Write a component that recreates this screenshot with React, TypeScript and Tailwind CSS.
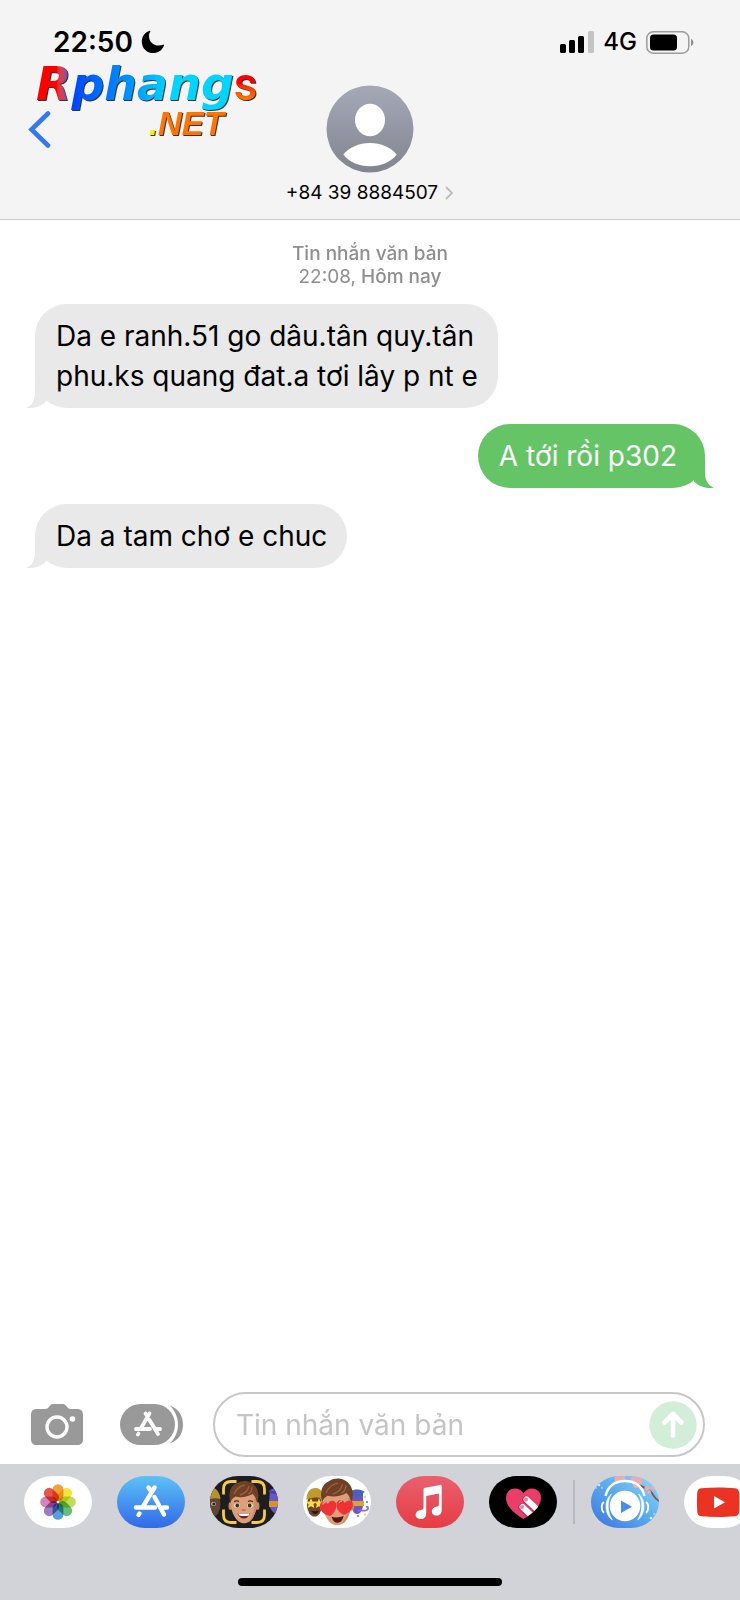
import type { ReactNode } from 'react';

type Message = {
  id: number;
  from: 'them' | 'me';
  lines: string[];
};

const messages: Message[] = [
  {
    id: 1,
    from: 'them',
    lines: ['Da e ranh.51 go dâu.tân quy.tân', 'phu.ks quang đat.a tơi lây p nt e'],
  },
  { id: 2, from: 'me', lines: ['A tới rồi p302'] },
  { id: 3, from: 'them', lines: ['Da a tam chơ e chuc'] },
];

function MoonIcon() {
  return (
    <svg width="24" height="24" viewBox="0 0 24 24" aria-hidden="true">
      <path
        d="M8.6.8C4 2.3.8 6.6.8 11.7c0 6.3 5 11.4 11.3 11.4 5 0 9.300-3.100 10.900-7.600.2-.6-.3-1.100-.9-.8-1.300.5-2.700.8-4.200.8C11.900 15.500 8 11.400 8 5.900c0-1.500.6-3.100 1.300-4.300.3-.6 0-1-.7-.8Z"
        fill="#000"
      />
    </svg>
  );
}

function SignalIcon() {
  return (
    <svg width="34" height="22" viewBox="0 0 34 22" aria-hidden="true">
      <rect x="0" y="13" width="6" height="9" rx="1.500" />
      <rect x="9" y="9" width="6" height="13" rx="1.500" />
      <rect x="18" y="5" width="6" height="17" rx="1.500" />
      <rect x="28" y="0" width="6" height="22" rx="1.500" fill="#c4c4c4" />
    </svg>
  );
}

function BatteryIcon() {
  return (
    <svg width="48" height="23" viewBox="0 0 48 23" aria-hidden="true">
      <rect x=".8" y=".8" width="42" height="21.400" rx="6.500" fill="none" stroke="#9b9b9b" strokeWidth="1.500" />
      <rect x="4" y="3.500" width="27" height="16" rx="3.500" />
      <path d="M45 8c3.200 1.200 3.200 5.800 0 7Z" fill="#8f8f8f" />
    </svg>
  );
}

function StatusBar() {
  return (
    <div className="flex h-[84px] items-start justify-between pt-[24px] pr-[46px] pl-[53px]">
      <div className="flex h-9 items-center gap-2">
        <time className="text-[28px] leading-9 font-semibold">22:50</time>
        <MoonIcon />
      </div>
      <div className="flex h-9 items-center gap-[9px]">
        <SignalIcon />
        <span className="text-[24px] leading-9 font-medium">4G</span>
        <BatteryIcon />
      </div>
    </div>
  );
}

function Watermark() {
  return (
    <div className="pointer-events-none absolute top-[56px] left-[36px] w-[222px] font-['DejaVu_Sans'] font-bold italic">
      <div className="flex items-baseline text-[46px] leading-[56px] drop-shadow-[1px_1px_0_#333333]">
        <span className="bg-linear-to-r from-[#ff0000] from-60% to-[#5a45b0] bg-clip-text text-transparent">R</span>
        <span className="bg-linear-to-r from-[#0040ff] via-[#0090ff] via-35% to-[#00d4ff] to-60% bg-clip-text text-transparent">
          phang
        </span>
        <span className="bg-linear-to-b from-[#ff0000] from-50% to-[#ff7a00] to-80% bg-clip-text font-['Roboto'] font-medium text-transparent not-italic">
          s
        </span>
      </div>
      <div className="-mt-2 pr-[34px] text-right font-['Liberation_Sans'] text-[33px] leading-[40px] text-[#ff7300] drop-shadow-[1px_1px_0_#333333]">
        <span className="text-[#ffee00]">.</span>NET
      </div>
    </div>
  );
}

function Avatar() {
  return (
    <svg width="88" height="88" viewBox="0 0 88 88" aria-hidden="true">
      <defs>
        <linearGradient id="avatar" x1="0" y1="0" x2="0" y2="1">
          <stop offset="0" stopColor="#a5a9b7" />
          <stop offset="1" stopColor="#82858f" />
        </linearGradient>
      </defs>
      <circle cx="44" cy="44" r="43.500" fill="url(#avatar)" />
      <ellipse cx="44" cy="35" rx="15" ry="16.300" fill="#fff" />
      <path d="M17.300 69.500C23 62.500 33 58 44 58s21 4.500 26.700 11.500C65 77 55 81.300 44 81.300S23 77 17.300 69.500Z" fill="#fff" />
    </svg>
  );
}

function ConversationHeader() {
  return (
    <header className="relative border-b border-[#cfcfcf] bg-[#f4f4f4]">
      <StatusBar />
      <div className="grid grid-cols-[1fr_auto_1fr] items-start pb-[14px]">
        <button type="button" aria-label="Quay lại" className="mt-[26px] ml-[28px] w-6">
          <svg width="24" height="38" viewBox="0 0 24 38" fill="none" aria-hidden="true">
            <path d="M20 3.500 3.500 19.500 20 35.500" stroke="#3478f6" strokeWidth="4.600" strokeLinecap="round" />
          </svg>
        </button>
        <button type="button" className="flex flex-col items-center gap-2 pt-[1px]">
          <Avatar />
          <span className="flex items-center gap-[6px] text-[19px] leading-6">
            +84 39 8884507
            <svg width="10" height="14" viewBox="0 0 10 14" fill="none" aria-hidden="true">
              <path d="m2 1 6 6-6 6" stroke="#bdbdbf" strokeWidth="1.800" />
            </svg>
          </span>
        </button>
      </div>
      <Watermark />
    </header>
  );
}

function Bubble({ message }: { message: Message }) {
  const mine = message.from === 'me';

  return (
    <li
      className={[
        'relative rounded-[32px] py-3 pl-[21px] text-[28px] leading-10',
        mine ? 'self-end bg-[#65c466] pr-7 text-white' : 'self-start bg-[#e9e9e9] pr-5 text-black',
      ].join(' ')}
    >
      {message.lines.map((line) => (
        <p key={line}>{line}</p>
      ))}
      <svg
        width="30"
        height="30"
        viewBox="0 0 30 30"
        aria-hidden="true"
        className={['absolute bottom-0', mine ? '-right-[9px] -scale-x-100 text-[#65c466]' : '-left-[9px] text-[#e9e9e9]'].join(' ')}
      >
        <path d="M9 0v15C9 22 6 27.500 0 29.800 8 31 15 28.500 20 23.500L22 0Z" fill="currentColor" />
      </svg>
    </li>
  );
}

function Composer() {
  return (
    <form className="flex items-center pr-[35px] pb-[7px] pl-[31px]" onSubmit={(event) => event.preventDefault()}>
      <button type="button" aria-label="Máy ảnh">
        <svg width="52" height="42" viewBox="0 0 52 42" aria-hidden="true">
          <path
            d="M6 5h8c2 0 3-.8 4-2.200C19.500.5 21 0 23 0h8c2 0 3.500.5 5 2.800C37 4.200 38 5 40 5h6c4 0 6 2 6 6v24c0 4-2 6-6 6H6c-4 0-6-2-6-6V11c0-4 2-6 6-6Z"
            fill="#999"
          />
          <circle cx="26" cy="23" r="10" fill="none" stroke="#fff" strokeWidth="3.400" />
          <circle cx="41.500" cy="15" r="2.800" fill="#fff" />
        </svg>
      </button>
      <button type="button" aria-label="Ứng dụng" className="ml-[37px]">
        <svg width="64" height="42" viewBox="0 0 64 42" aria-hidden="true">
          <rect x="0" y="0" width="55" height="41" rx="20.500" fill="#999" />
          <path d="M50 1.500C59 5 63 12 63 20.500S59 36 50 39.500C55 34 58 28 58 20.500S55 7 50 1.500Z" fill="#999" />
          <g fill="none" stroke="#fff" strokeWidth="3.800" strokeLinecap="round">
            <path d="M29.500 9.500 20.500 25M25.500 9.500l2 3M29.500 16 38 30M16 25h14M37 25h3M18.500 29.500l-.7 1" />
          </g>
        </svg>
      </button>
      <div className="ml-[29px] flex h-[65px] min-w-0 flex-1 items-center rounded-full border-2 border-[#c7c7c7] pr-[6px] pl-[21px]">
        <input
          type="text"
          aria-label="Tin nhắn văn bản"
          placeholder="Tin nhắn văn bản"
          className="min-w-0 flex-1 bg-transparent text-[28px] leading-10 outline-none placeholder:text-[#c5c5c7]"
        />
        <button type="submit" aria-label="Gửi">
          <svg width="48" height="48" viewBox="0 0 48 48" aria-hidden="true">
            <circle cx="24" cy="24" r="23.700" fill="#d3eed8" />
            <path d="M24 34.500V14M15.500 21.500 24 13l8.500 8.500" fill="none" stroke="#fff" strokeWidth="4.600" strokeLinecap="round" strokeLinejoin="round" />
          </svg>
        </button>
      </div>
    </form>
  );
}

const petals = ['#f3a13b', '#f2e33f', '#bfdc5c', '#65bd80', '#5b9fdc', '#9d7cc0', '#d386b8', '#e5574a'];

function PhotosIcon() {
  return (
    <svg width="68" height="52" viewBox="0 0 68 52" aria-hidden="true">
      <rect width="68" height="52" fill="#fff" />
      <g transform="translate(34 26)">
        {petals.map((color, index) => (
          <rect
            key={color}
            x="-5.400"
            y="-17.800"
            width="10.800"
            height="17"
            rx="5.400"
            fill={color}
            transform={`rotate(${index * 45})`}
            className="mix-blend-multiply"
          />
        ))}
        <circle r="1.300" fill="#fff" />
      </g>
    </svg>
  );
}

function AppStoreIcon() {
  return (
    <svg width="68" height="52" viewBox="0 0 68 52" aria-hidden="true">
      <defs>
        <linearGradient id="store" x1="0" y1="0" x2="0" y2="1">
          <stop offset="0" stopColor="#5cc2f6" />
          <stop offset="1" stopColor="#3269e8" />
        </linearGradient>
      </defs>
      <rect width="68" height="52" fill="url(#store)" />
      <path
        d="M37.500 11.500 26 30.500M31.500 11.500l3 4.500M37.500 21 47 38.500M19 31.500h19M46.500 31.500H50M22.500 37.500l-1 1.500"
        fill="none"
        stroke="#fff"
        strokeWidth="4.400"
        strokeLinecap="round"
      />
    </svg>
  );
}

function BoyFace({ hearts = false }: { hearts?: boolean }) {
  return (
    <g>
      <ellipse cx="20.500" cy="30" rx="2" ry="4" fill="#c98764" />
      <ellipse cx="47.500" cy="30" rx="2" ry="4" fill="#c98764" />
      <path d="M21 22c0-6 5-10 13-10s13 4 13 10c0 8 0 12-3 17.500-2.500 5-6 7.800-10 7.800s-7.500-2.800-10-7.800c-3-5.500-3-9.500-3-17.500Z" fill="#dc9f7a" />
      <path d="M44 22c1 8 0 17-6 24.500 3-1.500 5-4 6-7 2.500-6 3-10 3-17Z" fill="#cb8a66" />
      <path d="M20.500 27C18 17 20 10 27 7c7-4 15-2 19 4 3 5 3 10 1 16-.8-4-2-7-4.500-9-4.500 3-12 4-17 2.500-2.500 1.500-4.500 3-5 6.500Z" fill="#6f4026" />
      <path d="M24 18c2-5 6-8 11-9M30 19c4-1 8-4 9-9M38 18c3-1 4-4 4-7" stroke="#99603c" strokeWidth="1.300" fill="none" />
      {hearts ? (
        <>
          <path d="M28 39c-5-1.500-9.500-4-9.500-8.500 0-5 5-6 7.200-2.500 2-4.500 8-3.500 7.800 1.500-.3 4-2.500 7-5.500 9.500Z" fill="#f03236" />
          <path d="M40 38c-4-2.500-6.500-5-6.500-9.500 0-5 6-5.500 7.500-1.500 2.500-3.500 8-2 7.500 2.500-.5 4-4.500 7-8.500 8.500Z" fill="#f03236" />
          <path d="M21 28.500c.5-1.500 1.500-2 2.500-1.500M36 27c.5-1.500 1.500-2 2.500-1.500" stroke="#ff9a94" strokeWidth="1.300" fill="none" />
          <path d="M29 39.500c3 1 7 1 11-.5-.7 4-3 6-5.500 6s-4.500-2-5.500-5.500Z" fill="#571816" />
        </>
      ) : (
        <>
          <path d="M24 25.800c1.500-1.200 3.500-1.200 5-.4M38 25.400c1.500-.8 3.500-.8 5 .4" stroke="#593017" strokeWidth="1.200" fill="none" />
          <ellipse cx="27" cy="29.500" rx="2.800" ry="2" fill="#f4eee8" />
          <ellipse cx="40" cy="29.500" rx="2.800" ry="2" fill="#f4eee8" />
          <circle cx="27.300" cy="29.500" r="1.900" fill="#2c3a1f" />
          <circle cx="39.700" cy="29.500" r="1.900" fill="#2c3a1f" />
          <path d="M32 33.500c1 .8 2.500.8 3.500 0" stroke="#b36a4c" strokeWidth="1.200" fill="none" />
          <path d="M27.500 37c4 1.300 8.500 1.300 12.500 0-.8 3.500-3.300 5.500-6.200 5.500S28.300 40.500 27.500 37Z" fill="#74251f" />
          <path d="M28 37.300c3.500 1 8 1 11.500 0l-.7 2.200c-3 .7-6.500.7-9.500 0Z" fill="#fff" />
        </>
      )}
    </g>
  );
}

function MemojiCameraIcon() {
  return (
    <svg width="68" height="52" viewBox="0 0 68 52" aria-hidden="true">
      <rect width="68" height="52" fill="#1e1e1f" />
      <ellipse cx="2" cy="28" rx="8.500" ry="13" fill="#654334" />
      <path d="M0 11c6 0 10 5 10.500 12-4-1-7-1-10.500 0Z" fill="#b3922f" />
      <ellipse cx="3.500" cy="28" rx="2.400" ry="2" fill="#cfc6c0" />
      <circle cx="3.800" cy="28" r="1.500" fill="#222" />
      <path d="M60 14c3-2 6-2 9-1v26c-5-1-9-5-10-11Z" fill="#6757c7" />
      <path d="M59 25h10v6H59Z" fill="#d2942c" />
      <path d="M59 15c3 2 6 2 10 1" stroke="#45429a" strokeWidth="2.500" fill="none" />
      <BoyFace />
      <path
        d="M13.500 18.500V13c0-5 3-7.500 7.500-7.500h5.500M41.500 5.500H47c5 0 7.500 3 7.500 7.500v5.500M13.500 33.500V39c0 5 3 7.500 7.500 7.500h5.500M41.500 46.500H47c5 0 7.500-3 7.500-7.500v-5.500"
        fill="none"
        stroke="#f7cb45"
        strokeWidth="2.800"
      />
    </svg>
  );
}

function MemojiStickersIcon() {
  return (
    <svg width="68" height="52" viewBox="0 0 68 52" aria-hidden="true">
      <rect width="68" height="52" fill="#fff" />
      <ellipse cx="11.500" cy="29" rx="7.500" ry="11.500" fill="#6b442c" />
      <path d="M3.500 24c0-8 3.500-12 9-12 6 0 7.500 5 7.500 11-6-2-11-2-16.500 1Z" fill="#c19a2c" />
      <path d="m8 22 1.500 3.500 3.700.3-2.700 2.500.8 3.700L8 30.200 4.800 32l.7-3.700-2.700-2.500 3.700-.3Z" fill="#ffd83e" />
      <path d="m16 22 1.200 3.500 3.300.3-2.500 2.500.8 3.700-2.800-1.800-3 1.800.7-3.700-2.200-2.500 3.300-.3Z" fill="#ffd83e" />
      <path d="M8 34.500c3 1 5 1 8 0-1 4-6 5-8 0Z" fill="#2d1411" />
      <path d="M49 17c3-3 9-3 11 0v13c-1 5-3 8-6 8s-4-3-5-6Z" fill="#6757cb" />
      <path d="M48 15c3-2 9-2 12 0v4c-4 2-8 2-12 0Z" fill="#4b62b4" />
      <path d="M48 25h13v5H48Z" fill="#dfa22f" />
      <path d="M55 35c4-2 6 1 9-1 2-1 1-4-1-3" stroke="#9168d9" strokeWidth="1.800" fill="none" />
      <circle cx="60.500" cy="16" r="1" fill="#4b78df" />
      <circle cx="62" cy="21" r="1" fill="#f0c843" />
      <circle cx="64" cy="26" r="1" fill="#4b78df" />
      <circle cx="62" cy="38.500" r="1" fill="#f0c843" />
      <circle cx="55" cy="40" r="1" fill="#4b78df" />
      <g transform="translate(-3.400 -2.800) scale(1.100)">
        <BoyFace hearts />
      </g>
    </svg>
  );
}

function MusicIcon() {
  return (
    <svg width="68" height="52" viewBox="0 0 68 52" aria-hidden="true">
      <defs>
        <linearGradient id="music" x1="0" y1="0" x2="0" y2="1">
          <stop offset="0" stopColor="#e9606f" />
          <stop offset="1" stopColor="#e63c43" />
        </linearGradient>
      </defs>
      <rect width="68" height="52" fill="url(#music)" />
      <path
        d="M27.500 13.500c0-1 .6-1.500 1.500-1.700L44 8.900c1-.2 1.700.3 1.700 1.300v23.500c0 4-2 5.900-5 5.900-2.900 0-4.900-1.700-4.900-4.200 0-2.600 1.800-4.100 4.300-4.600 2-.4 2.800-.9 2.800-2.600V17.500L30.200 20v17c0 4-2.200 6-5.400 6-3 0-5.200-1.600-5.200-4.200 0-2.500 1.700-4 4.600-4.600 2.300-.4 3.300-1 3.300-2.700Z"
        fill="#fff"
      />
    </svg>
  );
}

function DigitalTouchIcon() {
  return (
    <svg width="68" height="52" viewBox="0 0 68 52" aria-hidden="true">
      <defs>
        <clipPath id="heart">
          <path d="M34.500 43C27 38.500 17 31 17 22c0-6 4-9.500 9-9.500 4 0 7 2 8.500 5 1.500-3 4.500-5 8.500-5 5 0 9 3.500 9 9.500 0 9-10 16.500-17.500 21Z" />
        </clipPath>
      </defs>
      <rect width="68" height="52" fill="#000" />
      <g clipPath="url(#heart)">
        <rect width="68" height="52" fill="#eb3d6a" />
        <path d="m37 23.500 14 13M33 31.500l13 12" stroke="#c42c56" strokeWidth="7.500" strokeLinecap="round" />
        <path d="m37.500 23.500 14 13M33.500 31l12 11.500" stroke="#fff" strokeWidth="6" strokeLinecap="round" />
      </g>
      <circle cx="37" cy="23.500" r="2" fill="#f27c9a" />
      <circle cx="33" cy="31" r="2" fill="#f27c9a" />
    </svg>
  );
}

function HeadphonesIcon() {
  return (
    <svg width="68" height="52" viewBox="0 0 68 52" aria-hidden="true">
      <defs>
        <linearGradient id="sky" x1="0" y1="1" x2="1" y2="0">
          <stop offset="0" stopColor="#3b73df" />
          <stop offset=".55" stopColor="#5daeee" />
          <stop offset="1" stopColor="#91dcf7" />
        </linearGradient>
      </defs>
      <rect width="68" height="52" fill="url(#sky)" />
      <path d="M48 9c6 3 10 4 13 8 2 3 3 6 7 8" stroke="#86534c" strokeWidth="1.800" fill="none" />
      <g fill="#eeaab7">
        <circle cx="27" cy="3" r="3.500" />
        <circle cx="32" cy="2" r="2.500" />
        <circle cx="43" cy="4" r="3.500" />
        <circle cx="48" cy="5" r="3.500" />
        <circle cx="45" cy="9" r="3" />
        <circle cx="56" cy="12" r="2.500" />
        <circle cx="62" cy="12" r="2" />
        <circle cx="58" cy="16" r="2" />
      </g>
      <g fill="#d8edff">
        <circle cx="8" cy="9" r="1.300" />
        <circle cx="5" cy="12" r=".8" />
        <circle cx="11" cy="12" r=".8" />
        <circle cx="60" cy="42" r="1.300" />
        <circle cx="63" cy="38" r=".8" />
      </g>
      <path d="M14.500 20C17 10 24 5 34 5s17 5 19.500 15" fill="none" stroke="#fff" strokeWidth="2.400" />
      <circle cx="34" cy="30" r="15.300" fill="#fff" />
      <path d="M20.500 18c-4.500 7-4.500 18 1 26-8-5-9-20-1-26ZM47.500 18c4.500 7 4.500 18-1 26 8-5 9-20 1-26Z" fill="#fff" stroke="#fff" strokeWidth=".6" />
      <path d="M13 26c-3 2-3 8 0 11M55 26c3 2 3 8 0 11" fill="none" stroke="#fff" strokeWidth="1.800" />
      <path d="M30 24.500v12.500l11-6.200Z" fill="#4a8de8" />
    </svg>
  );
}

function YouTubeIcon() {
  return (
    <svg width="68" height="52" viewBox="0 0 68 52" aria-hidden="true">
      <rect width="68" height="52" fill="#fff" />
      <path
        d="M17 12.200c11-1 24-1 34 0 3 .3 4 2 4.200 5 .4 6 .4 12 0 18-.2 3-1.200 4.700-4.200 5-10 1-23 1-34 0-2.500-.3-3.600-2-3.800-5-.4-6-.4-12 0-18 .2-3 1.300-4.700 3.800-5Z"
        fill="#ea3323"
      />
      <path d="M30 20v12.500l11-6.200Z" fill="#fff" />
    </svg>
  );
}

function AppButton({ label, children }: { label: string; children: ReactNode }) {
  return (
    <button type="button" aria-label={label} className="h-[52px] w-[68px] shrink-0 overflow-hidden rounded-[28px/26px]">
      {children}
    </button>
  );
}

function AppStrip() {
  return (
    <footer className="bg-[#d1d3d9] pt-3 pb-[14px]">
      <div className="flex items-center overflow-hidden pl-6">
        <div className="flex shrink-0 gap-[25px]">
          <AppButton label="Ảnh">
            <PhotosIcon />
          </AppButton>
          <AppButton label="App Store">
            <AppStoreIcon />
          </AppButton>
          <AppButton label="Memoji">
            <MemojiCameraIcon />
          </AppButton>
          <AppButton label="Nhãn dán Memoji">
            <MemojiStickersIcon />
          </AppButton>
          <AppButton label="Nhạc">
            <MusicIcon />
          </AppButton>
          <AppButton label="Digital Touch">
            <DigitalTouchIcon />
          </AppButton>
        </div>
        <div className="mx-4 h-11 w-[2px] shrink-0 bg-[#b8b9be]" />
        <div className="flex shrink-0 gap-[25px]">
          <AppButton label="Tai nghe">
            <HeadphonesIcon />
          </AppButton>
          <AppButton label="YouTube">
            <YouTubeIcon />
          </AppButton>
        </div>
      </div>
      <div className="mx-auto mt-[50px] h-2 w-[264px] rounded-full bg-black" />
    </footer>
  );
}

export default function App() {
  return (
    <div className="flex min-h-screen flex-col overflow-hidden bg-white font-['Inter',sans-serif] text-black">
      <ConversationHeader />
      <main className="flex-1 px-[35px] pt-[22px]">
        <div className="text-center text-[19px] leading-[23px] font-medium text-[#8e8e90]">
          <p>Tin nhắn văn bản</p>
          <p>
            <span className="font-normal">22:08,</span> Hôm nay
          </p>
        </div>
        <ul className="mt-4 flex flex-col gap-4">
          {messages.map((message) => (
            <Bubble key={message.id} message={message} />
          ))}
        </ul>
      </main>
      <Composer />
      <AppStrip />
    </div>
  );
}
